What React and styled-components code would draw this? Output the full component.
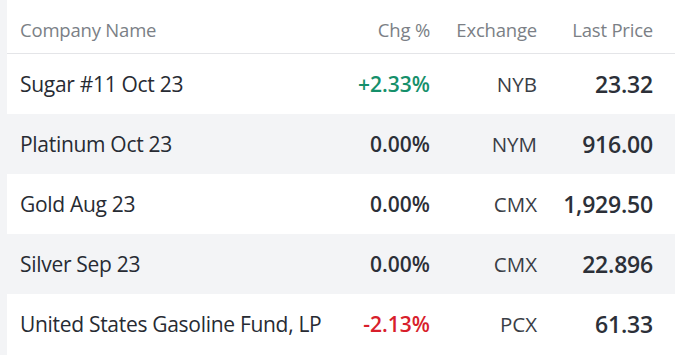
import React from 'react';
import styled, {createGlobalStyle} from 'styled-components';

const GlobalStyle = createGlobalStyle`
	html, body {
		margin: 0;
		padding: 0;
		background: #f3f4f6;
	}
	body {
		font-family: "Open Sans", "Noto Sans", sans-serif;
	}
`;

const Page = styled.div`
	width: 675px;
	height: 355px;
	overflow: hidden;
	padding-left: 7px;
	box-sizing: border-box;
`;

const Table = styled.div`
	background: #fff;
	height: 100%;
`;

const Row = styled.div`
	display: grid;
	grid-template-columns: 1fr 97px 107px 116px;
	align-items: center;
	height: ${props => props.head ? '53px' : '60px'};
	padding: 0 22px 0 13px;
	background: ${props => props.striped ? '#f3f4f6' : '#fff'};
	border-bottom: ${props => props.head ? '1px solid #e4e5e8' : 'none'};
`;

const HeadCell = styled.div`
	font-size: 18.5px;
	color: #7b7f86;
	text-align: ${props => props.left ? 'left' : 'right'};
	padding-top: 6px;
	letter-spacing: -0.2px;
`;

const Name = styled.div`
	font-size: 21px;
	color: #272b33;
	letter-spacing: -0.3px;
	white-space: nowrap;
`;

const Change = styled.div`
	font-size: 21px;
	font-weight: 600;
	text-align: right;
	color: ${props => props.value > 0 ? '#15906b' : props.value < 0 ? '#d81e2c' : '#2c3038'};
`;

const Exchange = styled.div`
	font-size: 20.5px;
	color: #3a3e46;
	text-align: right;
`;

const Price = styled.div`
	font-size: 23px;
	font-weight: 600;
	text-align: right;
	color: #2c3038;
	letter-spacing: -0.2px;
`;

const rows = [
	{name: 'Sugar #11 Oct 23', chg: 2.33, exchange: 'NYB', price: '23.32'},
	{name: 'Platinum Oct 23', chg: 0, exchange: 'NYM', price: '916.00'},
	{name: 'Gold Aug 23', chg: 0, exchange: 'CMX', price: '1,929.50'},
	{name: 'Silver Sep 23', chg: 0, exchange: 'CMX', price: '22.896'},
	{name: 'United States Gasoline Fund, LP', chg: -2.13, exchange: 'PCX', price: '61.33'},
];

const formatChange = v => (v > 0 ? '+' : '') + v.toFixed(2) + '%';

const App = () => (
	<Page>
		<GlobalStyle />
		<Table>
			<Row head>
				<HeadCell left>Company Name</HeadCell>
				<HeadCell>Chg %</HeadCell>
				<HeadCell>Exchange</HeadCell>
				<HeadCell>Last Price</HeadCell>
			</Row>
			{rows.map((r, i) => (
				<Row key={r.name} striped={i % 2 === 1}>
					<Name>{r.name}</Name>
					<Change value={r.chg}>{formatChange(r.chg)}</Change>
					<Exchange>{r.exchange}</Exchange>
					<Price>{r.price}</Price>
				</Row>
			))}
		</Table>
	</Page>
);

export default App;
